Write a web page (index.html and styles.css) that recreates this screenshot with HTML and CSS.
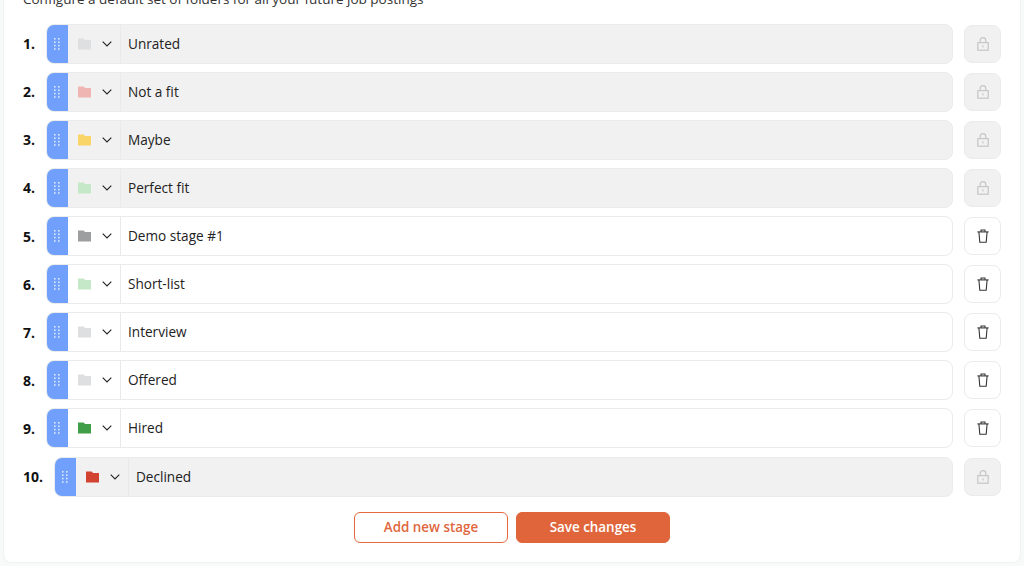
FILE: index.html
```html
<!DOCTYPE html>
<html lang="en">
<head>
<meta charset="utf-8">
<title>Default folders</title>
<link rel="stylesheet" href="styles.css">
</head>
<body>
<svg class="defs" width="0" height="0" aria-hidden="true">
  <defs>
    <symbol id="grip" viewBox="0 0 8 14"><g fill="#fff" opacity=".75"><rect x="1" y="1" width="1.6" height="1.6"/><rect x="5" y="1" width="1.6" height="1.6"/><rect x="1" y="4.4" width="1.6" height="1.6"/><rect x="5" y="4.4" width="1.6" height="1.6"/><rect x="1" y="7.8" width="1.6" height="1.6"/><rect x="5" y="7.8" width="1.6" height="1.6"/><rect x="1" y="11.2" width="1.6" height="1.6"/><rect x="5" y="11.2" width="1.6" height="1.6"/></g></symbol>
    <symbol id="folder" viewBox="0 0 14 12"><path d="M0 0h6l1.6 1.8H14V12H0z" fill="currentColor"/></symbol>
    <symbol id="chev" viewBox="0 0 10 6"><path d="M.7.7 5 5 9.3.7" fill="none" stroke="#222" stroke-width="1.1"/></symbol>
    <symbol id="lock" viewBox="0 0 12 14"><g fill="none" stroke="#c6c6c6" stroke-width="1.2"><rect x=".8" y="5.6" width="10.4" height="7.6"/><path d="M3.2 5.6V3.4a2.8 2.8 0 0 1 5.6 0v2.2"/></g><rect x="5.4" y="8.4" width="1.2" height="2" fill="#c6c6c6"/></symbol>
    <symbol id="trash" viewBox="0 0 12 14"><g fill="none" stroke="#333" stroke-width="1.1"><path d="M.4 2.9h11.2"/><path d="M4 2.7V1h4v1.7"/><path d="M1.9 3l.9 10.2h6.4L10.1 3"/></g></symbol>
  </defs>
</svg>
<main class="card">
  <p class="intro">Configure a default set of folders for all your future job postings</p>
  <ol class="stages">
    <li class="stage"><span class="num">1.</span><div class="field locked"><span class="grip"><svg class="ic-grip"><use href="#grip"/></svg></span><span class="picker"><svg class="ic-folder c-grey"><use href="#folder"/></svg><svg class="ic-chev"><use href="#chev"/></svg></span><span class="name">Unrated</span></div><span class="action locked"><svg class="ic-act"><use href="#lock"/></svg></span></li>
    <li class="stage"><span class="num">2.</span><div class="field locked"><span class="grip"><svg class="ic-grip"><use href="#grip"/></svg></span><span class="picker"><svg class="ic-folder c-pink"><use href="#folder"/></svg><svg class="ic-chev"><use href="#chev"/></svg></span><span class="name">Not a fit</span></div><span class="action locked"><svg class="ic-act"><use href="#lock"/></svg></span></li>
    <li class="stage"><span class="num">3.</span><div class="field locked"><span class="grip"><svg class="ic-grip"><use href="#grip"/></svg></span><span class="picker"><svg class="ic-folder c-yellow"><use href="#folder"/></svg><svg class="ic-chev"><use href="#chev"/></svg></span><span class="name">Maybe</span></div><span class="action locked"><svg class="ic-act"><use href="#lock"/></svg></span></li>
    <li class="stage"><span class="num">4.</span><div class="field locked"><span class="grip"><svg class="ic-grip"><use href="#grip"/></svg></span><span class="picker"><svg class="ic-folder c-mint"><use href="#folder"/></svg><svg class="ic-chev"><use href="#chev"/></svg></span><span class="name">Perfect fit</span></div><span class="action locked"><svg class="ic-act"><use href="#lock"/></svg></span></li>
    <li class="stage"><span class="num">5.</span><div class="field"><span class="grip"><svg class="ic-grip"><use href="#grip"/></svg></span><span class="picker"><svg class="ic-folder c-dgrey"><use href="#folder"/></svg><svg class="ic-chev"><use href="#chev"/></svg></span><span class="name">Demo stage #1</span></div><span class="action"><svg class="ic-act"><use href="#trash"/></svg></span></li>
    <li class="stage"><span class="num">6.</span><div class="field"><span class="grip"><svg class="ic-grip"><use href="#grip"/></svg></span><span class="picker"><svg class="ic-folder c-mint"><use href="#folder"/></svg><svg class="ic-chev"><use href="#chev"/></svg></span><span class="name">Short-list</span></div><span class="action"><svg class="ic-act"><use href="#trash"/></svg></span></li>
    <li class="stage"><span class="num">7.</span><div class="field"><span class="grip"><svg class="ic-grip"><use href="#grip"/></svg></span><span class="picker"><svg class="ic-folder c-grey"><use href="#folder"/></svg><svg class="ic-chev"><use href="#chev"/></svg></span><span class="name">Interview</span></div><span class="action"><svg class="ic-act"><use href="#trash"/></svg></span></li>
    <li class="stage"><span class="num">8.</span><div class="field"><span class="grip"><svg class="ic-grip"><use href="#grip"/></svg></span><span class="picker"><svg class="ic-folder c-grey"><use href="#folder"/></svg><svg class="ic-chev"><use href="#chev"/></svg></span><span class="name">Offered</span></div><span class="action"><svg class="ic-act"><use href="#trash"/></svg></span></li>
    <li class="stage"><span class="num">9.</span><div class="field"><span class="grip"><svg class="ic-grip"><use href="#grip"/></svg></span><span class="picker"><svg class="ic-folder c-green"><use href="#folder"/></svg><svg class="ic-chev"><use href="#chev"/></svg></span><span class="name">Hired</span></div><span class="action"><svg class="ic-act"><use href="#trash"/></svg></span></li>
    <li class="stage"><span class="num wide">10.</span><div class="field locked"><span class="grip"><svg class="ic-grip"><use href="#grip"/></svg></span><span class="picker"><svg class="ic-folder c-red"><use href="#folder"/></svg><svg class="ic-chev"><use href="#chev"/></svg></span><span class="name">Declined</span></div><span class="action locked"><svg class="ic-act"><use href="#lock"/></svg></span></li>
  </ol>
  <div class="buttons">
    <button class="btn btn-outline" type="button">Add new stage</button>
    <button class="btn btn-solid" type="button">Save changes</button>
  </div>
</main>
</body>
</html>
```
FILE: styles.css
```css
* { box-sizing: border-box; }
html, body { height: 566px; overflow: hidden; }
body {
  margin: 0;
  background: #f8f9f9;
  font-family: "Open Sans", "Liberation Sans", sans-serif;
  font-size: 13.6px;
  color: #222;
}
.defs { display: block; height: 0; }
.card {
  margin: -20px 3px 0 3px;
  height: 583px;
  padding: 9px 19px 0 19px;
  background: #fff;
  border: 1px solid #eff0f0;
  border-radius: 8px;
}
.intro {
  margin: 0;
  height: 24px;
  line-height: 19px;
  font-size: 13.5px;
  color: #333;
  white-space: nowrap;
}
.stages {
  list-style: none;
  margin: 9.6px 0 0 0;
  padding: 0;
  display: flex;
  flex-direction: column;
  gap: 8.12px;
}
.stage { display: flex; align-items: center; height: 40px; }
.num {
  width: 23px;
  flex: none;
  font-size: 14px;
  font-weight: 700;
  color: #111;
}
.num.wide { width: 31px; }
.field {
  flex: 1;
  min-width: 0;
  height: 40px;
  display: flex;
  border: 1px solid #ebebeb;
  border-radius: 8px;
  overflow: hidden;
  background: #fff;
}
.field.locked { background: #f1f1f1; }
.grip {
  width: 22px;
  margin-left: -1px;
  flex: none;
  display: flex;
  align-items: center;
  justify-content: center;
  background: #70a0fb;
}
.ic-grip { width: 8px; height: 14px; }
.picker {
  width: 53px;
  flex: none;
  display: flex;
  align-items: center;
  padding-left: 10px;
  gap: 11px;
  border-right: 1px solid #e9e9e9;
}
.ic-folder { width: 13px; height: 12px; flex: none; }
.ic-chev { width: 10px; height: 6px; flex: none; }
.c-grey { color: #dedfe0; }
.c-pink { color: #efb5b2; }
.c-yellow { color: #f8d566; }
.c-mint { color: #c4e8c8; }
.c-dgrey { color: #9c9ea0; }
.c-green { color: #3f9e47; }
.c-red { color: #d2432f; }
.name { padding-left: 7px; line-height: 38px; color: #222; white-space: nowrap; }
.action {
  width: 37px;
  height: 38px;
  margin-left: 11px;
  flex: none;
  display: flex;
  align-items: center;
  justify-content: center;
  border: 1px solid #ebebeb;
  border-radius: 8px;
  background: #fff;
}
.action.locked { background: #f1f1f1; }
.ic-act { width: 12px; height: 14px; }
.buttons {
  display: flex;
  justify-content: center;
  gap: 8px;
  margin-top: 15px;
}
.btn {
  width: 154px;
  height: 31px;
  padding: 0;
  border-radius: 6px;
  font-family: inherit;
  font-size: 13.4px;
  font-weight: 600;
  border: 1px solid #e4683c;
}
.btn-outline { background: #fff; color: #e0673d; }
.btn-solid { background: #e0653b; color: #fff; border-color: #e0653b; }
```
